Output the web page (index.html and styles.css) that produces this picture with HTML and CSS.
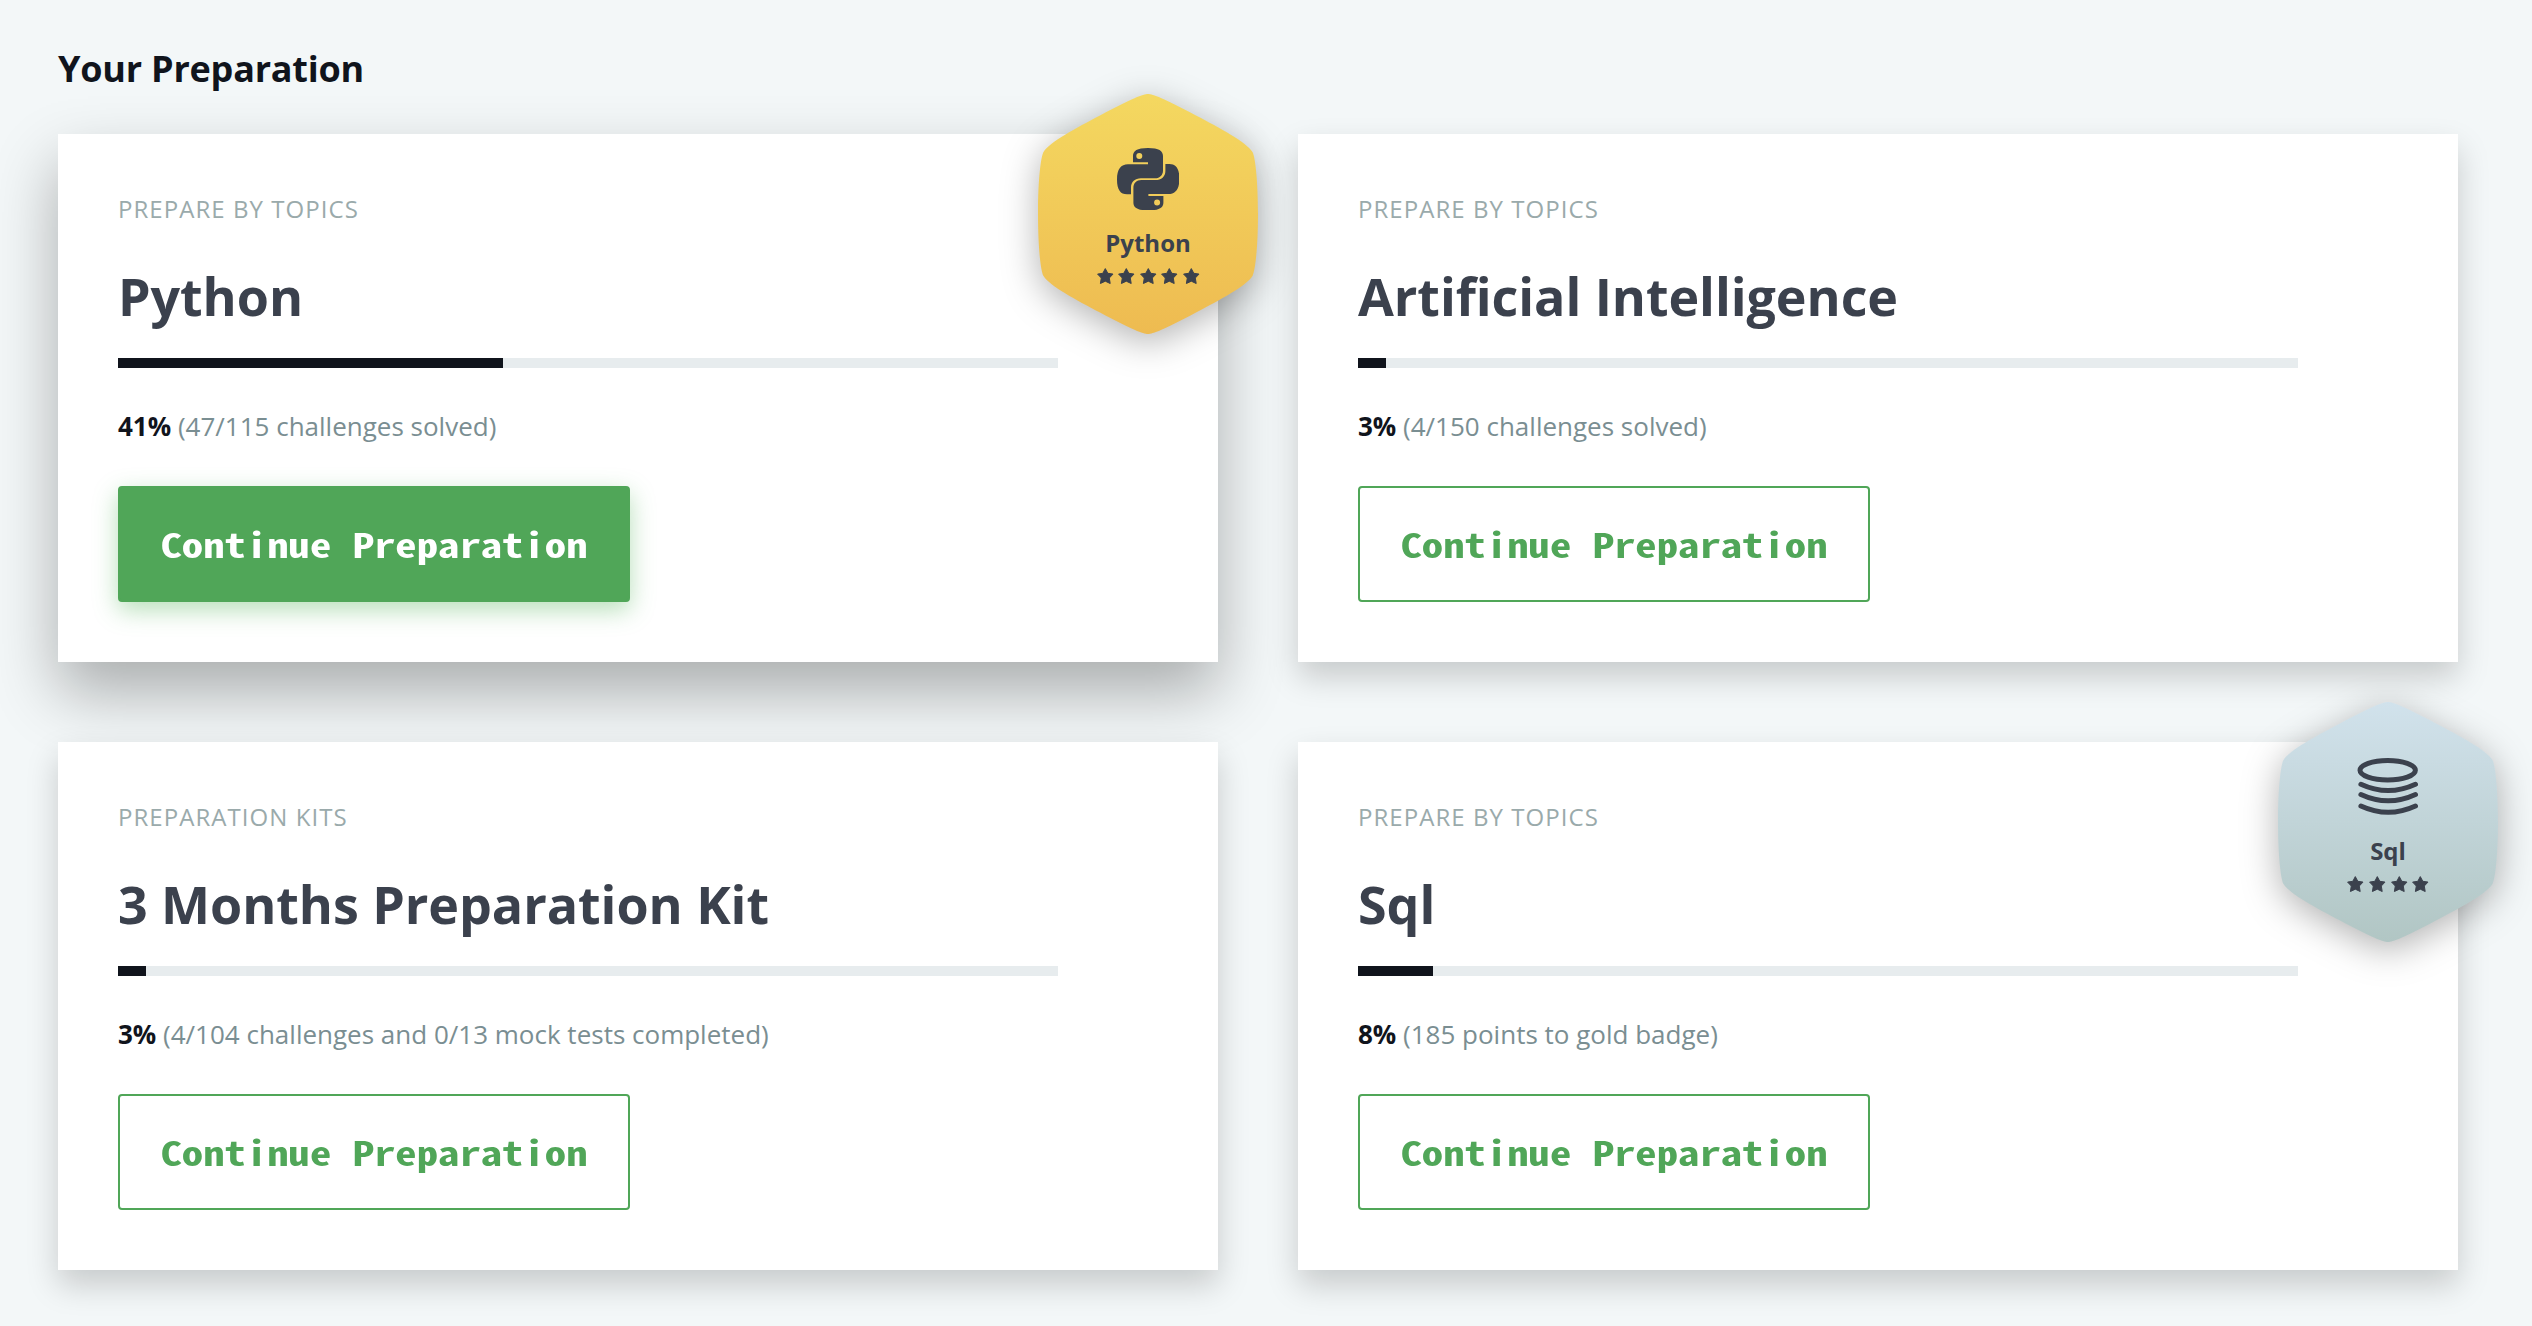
FILE: index.html
```
<!DOCTYPE html>
<html lang="en">
<head>
<meta charset="utf-8">
<title>Your Preparation</title>
<link rel="stylesheet" href="styles.css">
</head>
<body>
<svg class="defs" width="0" height="0" aria-hidden="true">
  <defs>
    <linearGradient id="gold" x1="0" y1="0" x2="0" y2="1"><stop offset="0" stop-color="#f4d860"/><stop offset="1" stop-color="#eebb51"/></linearGradient>
    <linearGradient id="silver" x1="0" y1="0" x2="0" y2="1"><stop offset="0" stop-color="#d1e2ec"/><stop offset="1" stop-color="#b1c6c4"/></linearGradient>
    <path id="hex" d="M110 0C115 0 125 4 158 21.5C182 34 208 48 214.5 58C217 62 220 85 220 120C220 155 217 178 214.5 182C208 192 182 206 158 218.5C125 236 115 240 110 240C105 240 95 236 62 218.5C38 206 12 192 5.500 182C3 178 0 155 0 120C0 85 3 62 5.500 58C12 48 38 34 62 21.500C95 4 105 0 110 0Z"/>
    <path id="star" d="M8.300.6 10.800 5.300 16 6.100 12.300 10 13.200 15.500 8.300 13.200 3.400 15.500 4.300 10 .6 6.100 5.800 5.300Z"/>
    <path id="snake" fill-rule="evenodd" d="M16 14.300V8C16 3 20 0 31 0S46 3 46 8V22.500C46 27 43 30.300 38 30.300H24C18 30.300 14 34 14 39.500V46.300H10C3.500 46.300 0 42 0 31.500S4 16.300 11 16.300H31V14.300ZM22.300 5A3 3 0 1 0 22.300 11A3 3 0 1 0 22.300 5Z"/>
  </defs>
</svg>
<main class="page">
  <h1 class="heading">Your Preparation</h1>
  <div class="grid">
    <section class="card card-active">
      <p class="label">PREPARE BY TOPICS</p>
      <h2 class="title">Python</h2>
      <div class="track"><div class="fill" style="width:41%"></div></div>
      <p class="stat"><strong>41%</strong> (47/115 challenges solved)</p>
      <button class="button button-primary"><span class="button-text">Continue Preparation</span></button>
      <div class="badge">
        <svg class="badge-shape" viewBox="0 0 220 240"><use href="#hex" fill="url(#gold)"/></svg>
        <svg class="badge-icon" viewBox="0 0 62.400 62.400"><use href="#snake"/><use href="#snake" transform="rotate(180 31.200 31.200)"/></svg>
        <span class="badge-name">Python</span>
        <div class="stars"><svg class="star"><use href="#star"/></svg><svg class="star"><use href="#star"/></svg><svg class="star"><use href="#star"/></svg><svg class="star"><use href="#star"/></svg><svg class="star"><use href="#star"/></svg></div>
      </div>
    </section>
    <section class="card">
      <p class="label">PREPARE BY TOPICS</p>
      <h2 class="title">Artificial Intelligence</h2>
      <div class="track"><div class="fill" style="width:3%"></div></div>
      <p class="stat"><strong>3%</strong> (4/150 challenges solved)</p>
      <button class="button"><span class="button-text">Continue Preparation</span></button>
    </section>
    <section class="card">
      <p class="label">PREPARATION KITS</p>
      <h2 class="title">3 Months Preparation Kit</h2>
      <div class="track"><div class="fill" style="width:3%"></div></div>
      <p class="stat"><strong>3%</strong> (4/104 challenges and 0/13 mock tests completed)</p>
      <button class="button"><span class="button-text">Continue Preparation</span></button>
    </section>
    <section class="card">
      <p class="label">PREPARE BY TOPICS</p>
      <h2 class="title">Sql</h2>
      <div class="track"><div class="fill" style="width:8%"></div></div>
      <p class="stat"><strong>8%</strong> (185 points to gold badge)</p>
      <button class="button"><span class="button-text">Continue Preparation</span></button>
      <div class="badge">
        <svg class="badge-shape" viewBox="0 0 220 240"><use href="#hex" fill="url(#silver)"/></svg>
        <svg class="badge-icon" viewBox="0 0 62.400 62.400"><g fill="none" stroke="#3b414d" stroke-width="5" stroke-linecap="round"><ellipse cx="30.700" cy="14.300" rx="27.700" ry="9.700"/><path d="M3.900 28.300Q31.200 40.900 58.500 28.300M3.900 38.500Q31.200 51.100 58.500 38.500M3.900 50Q31.200 62.600 58.500 50"/></g></svg>
        <span class="badge-name">Sql</span>
        <div class="stars"><svg class="star"><use href="#star"/></svg><svg class="star"><use href="#star"/></svg><svg class="star"><use href="#star"/></svg><svg class="star"><use href="#star"/></svg></div>
      </div>
    </section>
  </div>
</main>
</body>
</html>
```
FILE: styles.css
```
* { box-sizing: border-box; }

body {
  margin: 0;
  background: #f3f7f8;
  color: #3b414d;
  font-family: "Open Sans", "Noto Sans", sans-serif;
}

.defs { position: absolute; }

.page {
  min-height: 1326px;
  padding: 44px 74px 56px 58px;
}

.heading {
  margin: 0 0 40px;
  color: #10141c;
  font-size: 36px;
  font-weight: 700;
  line-height: 50px;
  letter-spacing: -0.22px;
}

.grid {
  display: grid;
  grid-template-columns: 1fr 1fr;
  gap: 80px;
}

.card {
  position: relative;
  height: 528px;
  padding: 60px;
  background: #fff;
  box-shadow: 0 15px 30px rgba(0, 0, 0, 0.18);
}

.card-active {
  box-shadow: 0 30px 60px rgba(0, 0, 0, 0.3);
}

.label {
  margin: 0 0 37px;
  color: #9aaaab;
  font-size: 24px;
  line-height: 30px;
  letter-spacing: 1.05px;
}

.title {
  margin: 0 0 27px;
  font-size: 52px;
  font-weight: 700;
  line-height: 70px;
  letter-spacing: -0.06px;
  font-variant-ligatures: common-ligatures;
}

.track {
  width: 940px;
  height: 10px;
  margin-bottom: 38px;
  background: #e7ecee;
}

.fill {
  height: 100%;
  background: #10141c;
}

.stat {
  margin: 0 0 40px;
  color: #7a8e92;
  font-size: 26px;
  line-height: 40px;
}

.stat strong { color: #10141c; }

.button {
  display: flex;
  align-items: center;
  justify-content: center;
  width: 512px;
  height: 116px;
  padding: 0 0 1px;
  border: 2px solid #50a658;
  border-radius: 4px;
  background: #fff;
  color: #50a658;
  font: bold 34px "Noto Sans Mono CJK JP", "DejaVu Sans Mono", monospace;
}

.button-text {
  display: block;
  white-space: nowrap;
  transform: scaleX(1.256);
}

.button-primary {
  background: #50a658;
  color: #fff;
  box-shadow: 0 8px 24px rgba(76, 175, 80, 0.4);
}

.badge {
  position: absolute;
  top: -40px;
  right: -40px;
  width: 220px;
  height: 240px;
  display: flex;
  flex-direction: column;
  align-items: center;
  padding-top: 54px;
}

.badge-shape {
  position: absolute;
  inset: 0;
  overflow: visible;
  filter: drop-shadow(0 8px 18px rgba(0, 0, 0, 0.3));
}

.badge-icon {
  position: relative;
  width: 62.400px;
  height: 62.400px;
  fill: #3b414d;
}

.badge-name {
  position: relative;
  margin-top: 17px;
  font-size: 24px;
  font-weight: 700;
  line-height: 32px;
}

.stars {
  position: relative;
  display: flex;
  gap: 5px;
  margin-top: 9px;
}

.star {
  width: 16.600px;
  height: 16.600px;
  overflow: visible;
  fill: #3b414d;
  stroke: #3b414d;
  stroke-width: 1;
  stroke-linejoin: round;
}
```
